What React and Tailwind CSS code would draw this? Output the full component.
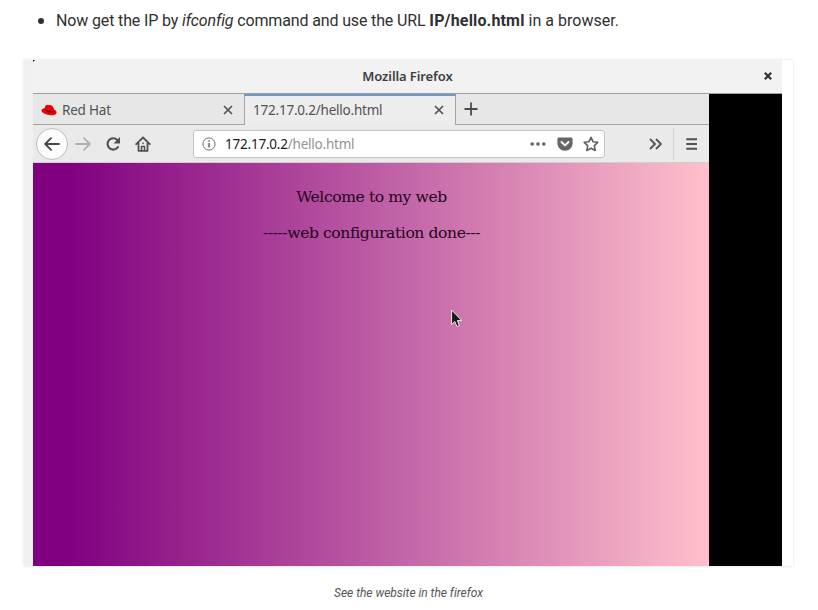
import React from "react";

const ui = "font-['Noto_Sans',sans-serif]";

function Close({ className = "" }) {
  return (
    <svg className={`shrink-0 ${className}`} width="10" height="10" viewBox="0 0 10 10" fill="none" stroke="currentColor" strokeWidth="1.7">
      <path d="M1 1l8 8M9 1L1 9" />
    </svg>
  );
}

function TitleBar() {
  return (
    <div className="relative flex h-[33px] items-center justify-center bg-[#f2f2f2] pb-[2px]">
      <span className={`${ui} text-[13px] font-semibold leading-4 text-[#3c3f40] tracking-[-0.1px]`}>Mozilla Firefox</span>
      <svg className="absolute right-[10px] top-[12px]" width="8" height="8" viewBox="0 0 8 8" stroke="#333" strokeWidth="2.2">
        <path d="M.8.8l6.4 6.4M7.2.8L.8 7.2" />
      </svg>
      <svg className="absolute left-0 top-0" width="2" height="2" viewBox="0 0 2 2"><path d="M0 0h2L0 2z" fill="#111" /></svg>
    </div>
  );
}

function Tabs() {
  return (
    <div className={`${ui} flex h-[31px] bg-[#e7e7e7] text-[13.5px] leading-[18px] text-[#505354]`}>
      <div className="flex w-[211px] items-center border-b border-[#a3a5a5] pl-2 pt-px">
        <svg width="16" height="12" viewBox="0 0 16 12" className="mr-[5px] shrink-0">
          <path d="M3.300 4.600L4.300 2.300C4.700 1.200 5.500.9 6.500 1.100c.9.2 1.500-.2 2.500 0 2 .3 2.900 1.200 3.500 2.700l.8 2c1.500.7 2.300 1.600 2.200 2.900-.2 2.300-3.700 2.900-7.400 2.200C4 10.100.4 8.400.5 6.400c0-1.300 1.300-1.800 2.800-1.800z" fill="#ee0000" />
          <path d="M3.200 4.800c.2 2.600 7 4.900 9.900 3.300l.2-1.500c-2.600 1.500-8.900.2-10.100-1.800z" fill="#600" />
        </svg>
        <span className="whitespace-nowrap tracking-[-0.2px]">Red Hat</span>
        <Close className="ml-auto mr-[11px]" />
      </div>
      <div className="flex w-[212px] items-center border-x border-t-2 border-x-[#a3a5a5] border-t-[#6f96c4] bg-[#ededee] pb-[2px] pl-[8px] pr-[11px]">
        <span className="whitespace-nowrap tracking-[-0.22px]">172.17.0.2/hello.html</span>
        <Close className="ml-auto" />
      </div>
      <div className="flex flex-1 items-center border-b border-[#a3a5a5] pl-2">
        <svg width="14" height="14" viewBox="0 0 14 14" stroke="#4c4c4c" strokeWidth="1.8"><path d="M7 .5v13M.5 7h13" /></svg>
      </div>
    </div>
  );
}

function NavIcons() {
  return (
    <div className="flex items-center">
      <div className="ml-[3px] flex size-8 items-center justify-center rounded-full border border-[#bdbdbd] bg-[#fdfdfd]">
        <svg width="16" height="14" viewBox="0 0 16 14" fill="none" stroke="#484848" strokeWidth="1.900" strokeLinecap="round" strokeLinejoin="round"><path d="M15 7H1.500M7 1.200L1.200 7 7 12.800" /></svg>
      </div>
      <svg className="ml-[7px]" width="16" height="14" viewBox="0 0 16 14" fill="none" stroke="#b0b0b0" strokeWidth="1.800" strokeLinecap="round" strokeLinejoin="round"><path d="M1 7h13.500M9 1.200L14.800 7 9 12.800" /></svg>
      <svg className="ml-[14px]" width="16" height="16" viewBox="0 0 16 16" fill="none" stroke="#505050" strokeWidth="2.100"><path d="M12.300 3.900A5.700 5.700 0 1 0 13 11" strokeLinecap="round" /><path d="M15 1v6.500H8.500z" fill="#505050" stroke="none" /></svg>
      <svg className="ml-[14px]" width="16" height="16" viewBox="0 0 16 16" fill="none" stroke="#505050" strokeWidth="1.800" strokeLinecap="round" strokeLinejoin="round"><path d="M1.200 8.200L8 1.500l6.800 6.700M3.500 7.500v7.300h9V7.500" /><path d="M6.500 14.500V10.500h3v4M8 7v.4" strokeWidth="1.500" /></svg>
    </div>
  );
}

function AddressBar() {
  return (
    <div className={`${ui} ml-[42px] flex h-[28px] w-[412px] items-center rounded-[3px] border border-[#c4c4c4] bg-white pl-[8px] pr-[5px]`}>
      <svg width="14" height="14" viewBox="0 0 14 14" fill="none" stroke="#707070"><circle cx="7" cy="7" r="6.100" /><path d="M7 6v4.500M7 3.300v1.500" strokeWidth="1.600" /></svg>
      <span className="ml-[9px] whitespace-nowrap text-[13.5px] leading-[18px] tracking-[-0.22px] text-[#202020]">172.17.0.2<span className="text-[#939393]">/hello.html</span></span>
      <svg className="ml-auto" width="16" height="4" viewBox="0 0 16 4" fill="#606060"><circle cx="2.200" cy="2" r="1.800" /><circle cx="8" cy="2" r="1.800" /><circle cx="13.800" cy="2" r="1.800" /></svg>
      <svg className="ml-[11px]" width="16" height="14" viewBox="0 0 16 14"><path d="M2 .4h12c1 0 1.600.6 1.600 1.600v4C15.600 10.500 12.200 13.700 8 13.700S.4 10.500.4 6V2C.4 1 1 .4 2 .4z" fill="#666" /><path d="M4.500 5L8 8.400 11.500 5" fill="none" stroke="#fff" strokeWidth="1.900" strokeLinecap="round" strokeLinejoin="round" /></svg>
      <svg className="ml-[10px]" width="16" height="16" viewBox="0 0 16 16" fill="none" stroke="#606060" strokeWidth="1.600" strokeLinejoin="round"><path d="M8 1.300l2 4.400 4.800.6-3.500 3.300.9 4.900L8 12.200l-4.200 2.300.9-4.900L1.200 6.300 6 5.700z" /></svg>
    </div>
  );
}

function Toolbar() {
  return (
    <div className="flex h-[38px] items-center border-b border-[#cfcfcf] bg-[#eaeaea]">
      <NavIcons />
      <AddressBar />
      <svg className="ml-[44px]" width="13" height="12" viewBox="0 0 13 12" fill="none" stroke="#555" strokeWidth="1.900"><path d="M1 1l5 5-5 5M7 1l5 5-5 5" /></svg>
      <div className="ml-[11px] h-8 w-px bg-[#d2d2d2]" />
      <svg className="ml-[12px]" width="11" height="12" viewBox="0 0 11 12" stroke="#505050" strokeWidth="1.900" strokeLinecap="round"><path d="M1 1.200h9.500M1 6h9.500M1 10.800h9.500" /></svg>
    </div>
  );
}

function WebPage() {
  return (
    <div className="relative h-[403px] bg-[linear-gradient(to_right,#800080_0%,#800080_5%,#ffc0cb_100%)] pt-[24px] text-center font-['DejaVu_Serif',serif] text-[15.6px] leading-5 tracking-[-0.42px] text-[#240520]">
      <p className="pl-px">Welcome to my web</p>
      <p className="mt-4 pl-px">-----web configuration done---</p>
      <svg className="absolute left-[418px] top-[146px]" width="12" height="19" viewBox="0 0 12 19"><path d="M.6 1v14.500l3.200-3 2.100 5 2.500-1-2-4.900h4.400z" fill="#161c18" stroke="#f5e8f0" strokeWidth="1" /></svg>
    </div>
  );
}

export default function App() {
  return (
    <main className="h-[610px] w-[818px] overflow-hidden bg-white font-['Roboto',sans-serif] text-[#303030]">
      <div className="flex h-[60px] items-start pl-[38px] pt-[10px]">
        <span className="mt-[8px] size-[6px] shrink-0 rounded-full bg-[#303030]" />
        <p className="ml-[12px] whitespace-nowrap text-[16px] leading-[22px] tracking-[-0.14px]">
          Now get the IP by <em>ifconfig</em> command and use the URL <strong className="tracking-[0.16px]">IP/hello.html</strong><span className="tracking-[0.02px]"> in a browser.</span>
        </p>
      </div>
      <figure className="ml-6 w-[769px]">
        <div className="flex h-[506px] shadow-[0_0_3px_rgba(0,0,0,0.14)]">
          <div className="w-[9px] bg-[#f0f0f0]" />
          <div className="w-[749px]">
            <TitleBar />
            <div className="flex h-[473px] border-t border-[#a0a0a0] bg-black">
              <div className="w-[676px]">
                <Tabs />
                <Toolbar />
                <WebPage />
              </div>
            </div>
          </div>
        </div>
        <figcaption className="mt-[19px] text-center text-[12px] italic leading-4 tracking-[-0.02px] text-[#555]">See the website in the firefox</figcaption>
      </figure>
    </main>
  );
}
